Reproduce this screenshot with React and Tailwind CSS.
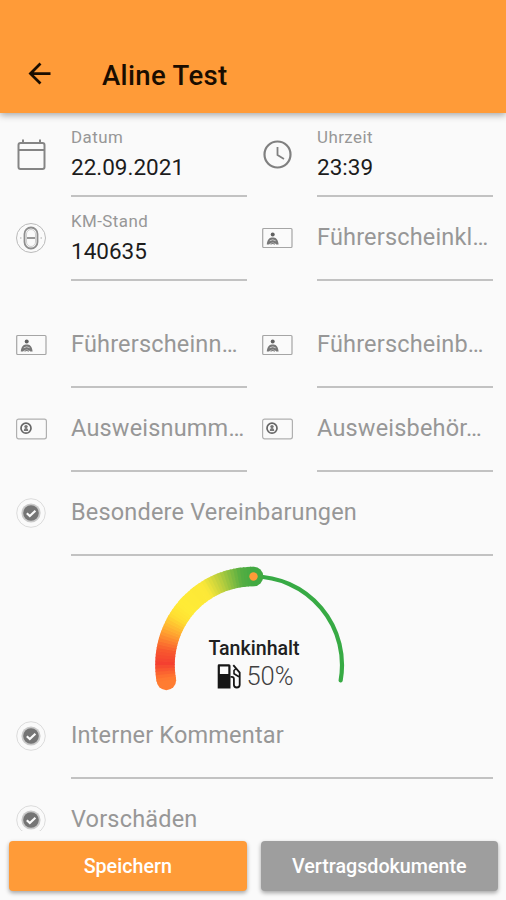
import { MdArrowBack } from "react-icons/md";

const FONT = "font-[Roboto,sans-serif]";

// Colour stops along the filled part of the gauge, in degrees from the left end of the horizontal axis
const STOPS = [
  [-16, [255, 142, 52]],
  [-8, [255, 118, 48]],
  [1, [244, 64, 48]],
  [9, [248, 88, 46]],
  [20, [255, 158, 48]],
  [32, [255, 224, 50]],
  [40, [255, 235, 54]],
  [58, [252, 232, 56]],
  [68, [190, 208, 62]],
  [82, [86, 174, 66]],
  [91, [62, 168, 66]],
];

const CX = 99.5;
const CY = 101;
const R = 88.5;

function colorAt(deg) {
  const i = Math.max(1, STOPS.findIndex(([d]) => d >= deg));
  const [d0, a] = STOPS[i - 1];
  const [d1, b] = STOPS[i];
  const t = (deg - d0) / (d1 - d0);
  return `rgb(${a.map((v, k) => Math.round(v + (b[k] - v) * t)).join(",")})`;
}

function point(deg) {
  const rad = (deg * Math.PI) / 180;
  return [CX - R * Math.cos(rad), CY - R * Math.sin(rad)];
}

function arc(from, to) {
  const [x0, y0] = point(from);
  const [x1, y1] = point(to);
  return `M${x0} ${y0}A${R} ${R} 0 0 1 ${x1} ${y1}`;
}

const CalendarIcon = () => (
  <svg width="32" height="34" viewBox="0 0 32 34" fill="none" stroke="#858585" strokeWidth="2">
    <rect x="3.5" y="6" width="26" height="26" rx="2" />
    <path d="M3.5 13h26M8 2.5V6M25 2.5V6" />
  </svg>
);

const ClockIcon = () => (
  <svg width="32" height="34" viewBox="0 0 32 34" fill="none" stroke="#808080" strokeWidth="2.2">
    <circle cx="16.5" cy="17.5" r="13" />
    <path d="M16.5 10v8l6.5 4" strokeWidth="1.8" />
  </svg>
);

const KmIcon = () => (
  <svg width="32" height="32" viewBox="0 0 32 32" fill="none" stroke="#8e8e8e">
    <circle cx="16" cy="16" r="14.5" stroke="#bbb" />
    <rect x="9.5" y="5.5" width="13" height="21" rx="6.5" strokeWidth="1.8" />
    <rect x="11.5" y="7.5" width="9" height="17" rx="4.5" stroke="#c4c4c4" strokeWidth="0.8" />
    <path d="M12 16h8" stroke="#999" strokeWidth="2" />
    <path d="M5 16h1.5M25.5 16H27" stroke="#aaa" />
  </svg>
);

const LicenseIcon = () => (
  <svg width="32" height="22" viewBox="0 0 32 22" fill="none">
    <rect x="1.7" y="1.5" width="29.3" height="19" rx="1" stroke="#a5a5a5" strokeWidth="1.2" />
    <circle cx="11.7" cy="7.4" r="2" fill="#606060" />
    <path d="M5.8 17.4c.3-3.6 2.2-6.8 4.9-6.8h2c2.7 0 4.6 3.2 4.9 6.8h-2.3c-1.8-2.2-5.4-2.2-7.2 0z" fill="#777" />
    <path d="M8.7 13.8q3-2 6 0" stroke="#fafafa" strokeWidth="0.6" />
    <path d="M9.5 17.3q2.2-1.6 4.4 0" stroke="#777" strokeWidth="1.2" />
  </svg>
);

const IdIcon = () => (
  <svg width="32" height="22" viewBox="0 0 32 22" fill="none">
    <rect x="1.6" y="1.2" width="29.8" height="19.6" rx="2" stroke="#b0b0b0" strokeWidth="1.2" />
    <circle cx="11" cy="10.2" r="5" stroke="#666" strokeWidth="1.7" />
    <circle cx="11" cy="8.6" r="1.7" fill="#777" />
    <path d="M8.8 13c0-2.2.8-3 2.2-3s2.2.8 2.2 3z" fill="#777" />
  </svg>
);

const CheckIcon = () => (
  <svg width="32" height="32" viewBox="0 0 32 32" fill="none">
    <circle cx="16" cy="16" r="14.3" stroke="#dcdcdc" />
    <circle cx="16" cy="16" r="9.6" fill="#c9c9c9" />
    <circle cx="16" cy="16" r="7.8" fill="#757575" />
    <path d="M11.8 16.2l3 2.800 5.600-5.200" stroke="#fafafa" strokeWidth="2.2" />
  </svg>
);

const FuelIcon = () => (
  <svg width="25" height="25" viewBox="0 0 25 25" fill="none">
    <path fillRule="evenodd" d="M2.5 0.3h9.5a1.5 1.5 0 0 1 1.5 1.5v22.7H0.7V1.8A1.5 1.5 0 0 1 2.5 0.3zM2.9 2.5v7.5h8.4V2.5z" fill="#161616" />
    <path d="M13.500 12.800h1.300c1.600 0 2.100.8 2.100 2.200v5.800c0 3.600 5.800 3.600 5.800 0V8.600L16.300 1.200" stroke="#161616" strokeWidth="1.8" />
    <path d="M19 4.500l-2 2v3.300l5 3" stroke="#161616" strokeWidth="1.6" />
  </svg>
);

// A form row cell: icon column, then either a floating label with value or a placeholder
const Field = ({ icon, label, value }) => (
  <div className="flex h-[84px] min-w-0 flex-1">
    <div className="flex h-[82px] w-[56px] shrink-0 items-center">{icon}</div>
    <div className="flex min-w-0 flex-1 flex-col border-b-2 border-[#c2c2c2]">
      {value ? (
        <>
          <span className="mt-[14px] text-[16.9px] leading-5 tracking-[0.45px] text-[#979797]">{label}</span>
          <span className="mt-[6px] text-[22.5px] leading-7 text-[#1c1c1c]">{value}</span>
        </>
      ) : (
        <span className="mt-[25px] whitespace-nowrap text-[23.5px] leading-[30px] tracking-[0.18px] text-[#979797]">{label}</span>
      )}
    </div>
  </div>
);

const Row = ({ children }) => <div className="flex gap-[14px] pl-[15px] pr-[13px]">{children}</div>;

const Gauge = () => {
  const segments = [];
  for (let d = -10; d < 90; d += 2) segments.push(d);
  return (
    <div className="flex h-[139px] justify-center pl-[2px]">
      <div className="grid w-[200px]">
        <svg width="200" height="139" viewBox="0 -8 200 139" fill="none" className="col-start-1 row-start-1">
          <path d={arc(90, 190)} stroke="#37aa44" strokeWidth="4.2" strokeLinecap="round" />
          <circle cx={point(-10)[0]} cy={point(-10)[1]} r="9.8" fill={colorAt(-10)} />
          <circle cx={point(90)[0]} cy={point(90)[1]} r="9.8" fill={colorAt(90)} />
          {segments.map(d => (
            <path key={d} d={arc(d, Math.min(d + 2.5, 90))} stroke={colorAt(d + 1)} strokeWidth="19.6" />
          ))}
          <circle cx={CX} cy={CY - R} r="4.2" fill="#ff9b38" />
        </svg>
        <div className="col-start-1 row-start-1 flex flex-col items-center pt-[81px]">
          <span className="text-[19.6px] font-medium leading-6 text-[#202020]">Tankinhalt</span>
          <div className="mt-px flex items-center gap-[4px] pl-[3px]">
            <FuelIcon />
            <span className="text-[25.5px] font-light leading-7 text-[#404040]">50%</span>
          </div>
        </div>
      </div>
    </div>
  );
};

export default function App() {
  return (
    <div className={`flex h-[900px] w-[506px] flex-col overflow-hidden bg-[#fafafa] ${FONT}`}>
      {/* App bar */}
      <header className="z-10 flex h-[113px] shrink-0 items-end bg-[#ff9b38] pl-[23px] shadow-[0_2px_7px_rgba(0,0,0,0.35)]">
        <div className="flex h-[78px] items-center">
          <MdArrowBack size={33} color="#1a0d00" className="mb-0.5" />
          <h1 className="ml-[46px] pt-[3px] text-[27.5px] font-medium tracking-[0.35px] text-[#1a0d00]">Aline Test</h1>
        </div>
      </header>

      {/* Form */}
      <main className="h-[718px] shrink-0 overflow-hidden">
        <Row>
          <Field icon={<CalendarIcon />} label="Datum" value="22.09.2021" />
          <Field icon={<ClockIcon />} label="Uhrzeit" value="23:39" />
        </Row>
        <Row>
          <Field icon={<KmIcon />} label="KM-Stand" value="140635" />
          <Field icon={<LicenseIcon />} label="Führerscheinkl…" />
        </Row>
        <div className="mt-[23px]">
          <Row>
            <Field icon={<LicenseIcon />} label="Führerscheinn…" />
            <Field icon={<LicenseIcon />} label="Führerscheinb…" />
          </Row>
        </div>
        <Row>
          <Field icon={<IdIcon />} label="Ausweisnumm…" />
          <Field icon={<IdIcon />} label="Ausweisbehör…" />
        </Row>
        <Row>
          <Field icon={<CheckIcon />} label="Besondere Vereinbarungen" />
        </Row>
        <Gauge />
        <Row>
          <Field icon={<CheckIcon />} label="Interner Kommentar" />
        </Row>
        <Row>
          <Field icon={<CheckIcon />} label="Vorschäden" />
        </Row>
      </main>

      {/* Actions */}
      <footer className="flex gap-[14px] pl-[9px] pr-2 pt-[10px]">
        <button className="h-[50px] flex-1 rounded bg-[#ff9b38] pt-0.5 text-[19.7px] font-medium text-white shadow-[0_2px_4px_rgba(0,0,0,0.35)]">
          Speichern
        </button>
        <button className="h-[50px] flex-1 rounded bg-[#9e9e9e] pt-0.5 text-[19.7px] font-medium text-white shadow-[0_2px_4px_rgba(0,0,0,0.35)]">
          Vertragsdokumente
        </button>
      </footer>
    </div>
  );
}
